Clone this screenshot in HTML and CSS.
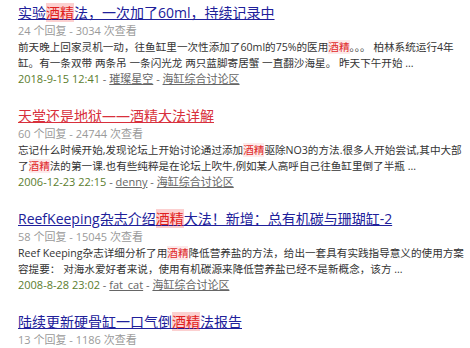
FILE: index.html
```html
<!DOCTYPE html>
<html>
<head>
    <title>搜索结果 - 酒精</title>
    <link rel="stylesheet" href="styles.css">
</head>
<body>
    <div class="results">
        <div class="item">
            <a class="title" href="#">实验<em>酒精</em>法，一次加了60ml，持续记录中</a>
            <div class="meta">24 个回复 - 3034 次查看</div>
            <div class="snippet">
                <span>前天晚上回家灵机一动，往鱼缸里一次性添加了60ml的75%的医用<em>酒精</em>。。。 柏林系统运行4年</span>
                <span>缸。有一条双带 两条吊 一条闪光龙 两只蓝脚寄居蟹 一直翻沙海星。 昨天下午开始 ...</span>
            </div>
            <div class="info"><span class="date">2018-9-15 12:41</span> - <a href="#">璀璨星空</a> - <a href="#">海缸综合讨论区</a></div>
        </div>
        <div class="item">
            <a class="title visited" href="#">天堂还是地狱——酒精大法详解</a>
            <div class="meta">60 个回复 - 24744 次查看</div>
            <div class="snippet">
                <span>忘记什么时候开始,发现论坛上开始讨论通过添加<em>酒精</em>驱除NO3的方法.很多人开始尝试,其中大部</span>
                <span>了<em>酒精</em>法的第一课.也有些纯粹是在论坛上吹牛,例如某人高呼自己往鱼缸里倒了半瓶 ...</span>
            </div>
            <div class="info"><span class="date">2006-12-23 22:15</span> - <a href="#">denny</a> - <a href="#">海缸综合讨论区</a></div>
        </div>
        <div class="item">
            <a class="title" href="#">ReefKeeping杂志介绍<em>酒精</em>大法！新增：总有机碳与珊瑚缸-2</a>
            <div class="meta">58 个回复 - 15045 次查看</div>
            <div class="snippet">
                <span>Reef Keeping杂志详细分析了用<em>酒精</em>降低营养盐的方法，给出一套具有实践指导意义的使用方案</span>
                <span>容提要： 对海水爱好者来说，使用有机碳源来降低营养盐已经不是新概念，该方 ...</span>
            </div>
            <div class="info"><span class="date">2008-8-28 23:02</span> - <a href="#">fat_cat</a> - <a href="#">海缸综合讨论区</a></div>
        </div>
        <div class="item">
            <a class="title" href="#">陆续更新硬骨缸一口气倒<em>酒精</em>法报告</a>
            <div class="meta">13 个回复 - 1186 次查看</div>
        </div>
    </div>
</body>
</html>
```
FILE: styles.css
```css
body {
    margin: 0;
    padding: 3px 0 0 18px;
    background: #fff;
    font-family: "Open Sans", "Noto Sans CJK SC", sans-serif;
    overflow: hidden;
}
.results {
    height: 345px;
    overflow: hidden;
}
.item {
    display: flex;
    flex-direction: column;
    align-items: flex-start;
    margin-bottom: 19px;
}
.title {
    font-size: 14px;
    line-height: 20px;
    color: #20209a;
    text-decoration: underline;
    white-space: nowrap;
}
.title em {
    font-style: normal;
    color: #e02020;
    background: #fcd0d0;
}
.title.visited {
    color: #d8303c;
}
.meta {
    font-size: 11px;
    line-height: 16px;
    color: #9a9a9a;
}
.snippet {
    display: flex;
    flex-direction: column;
    font-size: 10.6px;
    line-height: 16px;
    color: #333;
}
.snippet span {
    white-space: nowrap;
}
.snippet em {
    font-style: normal;
    color: #e02a2a;
    background: #fdeaea;
}
.info {
    font-size: 11px;
    line-height: 16px;
    color: #666;
}
.info .date {
    color: #5b7d2e;
}
.info a {
    color: #666;
}
```
